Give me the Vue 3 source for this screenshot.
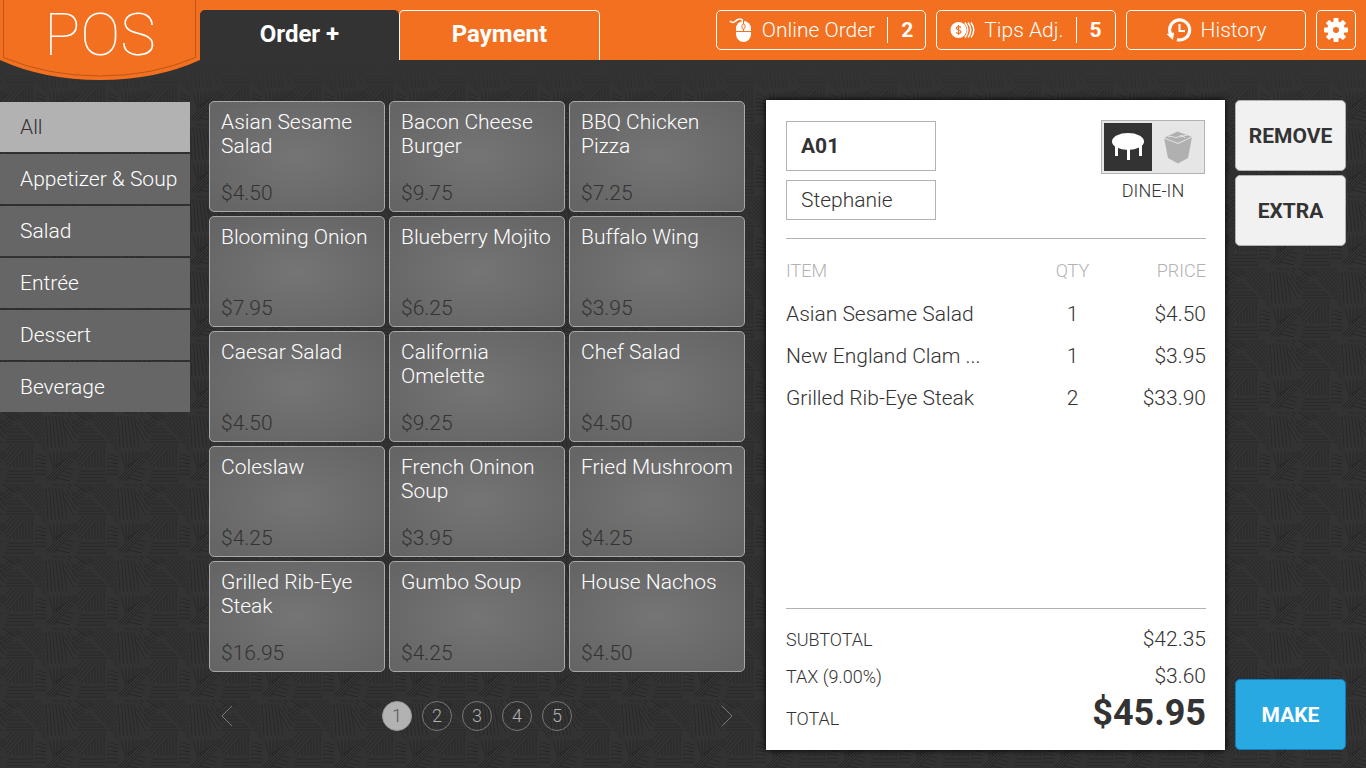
<script setup>
import { ref } from 'vue'

const categories = ['All', 'Appetizer & Soup', 'Salad', 'Entrée', 'Dessert', 'Beverage']
const category = ref('All')

const products = [
  ['Asian Sesame Salad', '$4.50'],
  ['Bacon Cheese Burger', '$9.75'],
  ['BBQ Chicken Pizza', '$7.25'],
  ['Blooming Onion', '$7.95'],
  ['Blueberry Mojito', '$6.25'],
  ['Buffalo Wing', '$3.95'],
  ['Caesar Salad', '$4.50'],
  ['California Omelette', '$9.25'],
  ['Chef Salad', '$4.50'],
  ['Coleslaw', '$4.25'],
  ['French Oninon Soup', '$3.95'],
  ['Fried Mushroom', '$4.25'],
  ['Grilled Rib-Eye Steak', '$16.95'],
  ['Gumbo Soup', '$4.25'],
  ['House Nachos', '$4.50'],
]

const lines = [
  ['Asian Sesame Salad', 1, '$4.50'],
  ['New England Clam ...', 1, '$3.95'],
  ['Grilled Rib-Eye Steak', 2, '$33.90'],
]

const table = ref('A01')
const customer = ref('Stephanie')
const page = ref(1)
const mode = ref('DINE-IN')

// Evenly spaced strokes between a first and a last segment: [x1, y1, x2, y2]
function hatch(a, b, n) {
  let d = ''
  for (let i = 0; i < n; i++) {
    const [x1, y1, x2, y2] = a.map((v, k) => +(v + ((b[k] - v) * i) / (n - 1)).toFixed(1))
    d += `M${x1} ${y1}L${x2} ${y2}`
  }
  return d
}
const texture = [
  hatch([13, 0, 46, 38], [38, 0, 45, 8], 8),
  hatch([2, 0, 18, 10], [12, 0, 20, 5], 3),
  hatch([46, 4, 48, 36], [62, 4, 67, 35], 6),
  hatch([0, 12, 13, 3], [3, 22, 14, 14], 4),
  hatch([16, 14, 18, 14], [8, 20, 25, 20], 3),
  hatch([7, 24, 29, 24], [5, 30, 35, 30], 3),
  hatch([14, 48, 14, 56], [32, 32, 32, 56], 7),
  hatch([2, 43, 12, 32], [7, 57, 29, 32], 5),
  hatch([8, 59, 33, 59], [5, 69, 34, 69], 4),
  hatch([45, 68, 75, 38], [53, 69, 79, 43], 4),
  hatch([36, 42, 46, 45], [34, 62, 46, 62], 6),
  hatch([49, 41, 54, 57], [70, 39, 60, 53], 6),
  hatch([63, 12, 74, 32], [68, 3, 79, 16], 4),
  hatch([56, 66, 70, 69], [66, 56, 73, 58], 4),
  hatch([52, 0, 58, 2], [68, 0, 72, 2], 3),
].join('')
</script>

<template>
  <div class="pos">
    <svg class="texture" aria-hidden="true">
      <defs>
        <pattern id="weave" width="72" height="72" y="64" patternUnits="userSpaceOnUse">
          <g fill="none" stroke="#272727">
            <path :d="texture" />
            <path :d="texture" transform="translate(-72 0)" />
          </g>
        </pattern>
      </defs>
      <rect width="100%" height="100%" fill="url(#weave)" />
    </svg>

    <header class="bar">
      <a class="logo" href="#">
        <svg width="200" height="80" viewBox="0 0 200 80" aria-hidden="true">
          <path d="M0 0H200V60Q156 80 100 80T0 60Z" fill="#f37021" />
          <path d="M3.500 0V57.500Q48 76 100 76T195.500 57.500V0" fill="none" stroke="#bd5616" />
        </svg>
        <span>POS</span>
      </a>
      <nav class="tabs">
        <button class="tab on">Order +</button>
        <button class="tab">Payment</button>
      </nav>
      <div class="tools">
        <button class="tool count">
          <svg width="24" height="26" viewBox="0 0 24 26" aria-hidden="true">
            <path d="M1 4C4 7 5 5 8 3S14 2 15 6" fill="none" stroke="#fff" stroke-width="1.600" />
            <rect x="7" y="4" width="15" height="21" rx="7.500" fill="#fff" />
            <path d="M7 14.500H22M14.500 3V14" stroke="#f37021" />
            <rect x="13" y="7" width="3" height="5" rx="1.500" fill="#fff" stroke="#f37021" />
          </svg>
          <span>Online Order</span><b>2</b>
        </button>
        <button class="tool count">
          <svg width="25" height="18" viewBox="0 0 25 18" aria-hidden="true">
            <circle cx="8.500" cy="9" r="8" fill="#fff" />
            <path d="M11 6.500C9.500 5 6.300 5.500 6.300 7.300C6.300 9.500 11 8.500 11 10.800C11 12.700 7.500 13 6 11.300M8.500 4V14" fill="none" stroke="#f37021" stroke-width="1.200" />
            <path d="M15 1.500Q20.500 9 15 16.500M18 1.500Q23.500 9 18 16.500M21 1.500Q26.500 9 21 16.500" fill="none" stroke="#fff" stroke-width="1.500" />
          </svg>
          <span>Tips Adj.</span><b>5</b>
        </button>
        <button class="tool">
          <svg width="26" height="26" viewBox="0 0 26 26" aria-hidden="true">
            <path d="M4.500 17A10 10 0 1 1 11 22.600" fill="none" stroke="#fff" stroke-width="3.200" />
            <path d="M0.500 17L8 15.500L7 23Z" fill="#fff" />
            <path d="M13.500 7V14H19" fill="none" stroke="#fff" stroke-width="2" />
          </svg>
          <span>History</span>
        </button>
        <button class="tool gear" aria-label="Settings">
          <svg width="24" height="24" viewBox="-12 -12 24 24" aria-hidden="true">
            <g fill="#fff">
              <rect v-for="n in 4" :key="n" x="-2.500" y="-12" width="5" height="24" rx="1" :transform="`rotate(${n * 45})`" />
            </g>
            <circle r="5.700" fill="none" stroke="#fff" stroke-width="6" />
            <circle r="3" fill="#f37021" />
          </svg>
        </button>
      </div>
    </header>

    <main class="work">
      <nav class="cats">
        <button v-for="c in categories" :key="c" :class="{ on: c === category }" @click="category = c">{{ c }}</button>
      </nav>

      <section class="menu">
        <div class="grid">
          <button v-for="p in products" :key="p[0]" class="card">
            <span>{{ p[0] }}</span>
            <span class="cost">{{ p[1] }}</span>
          </button>
        </div>
        <nav class="pager">
          <button class="arrow" aria-label="Previous page">
            <svg width="12" height="22" viewBox="0 0 12 22"><path d="M11 1L1 11L11 21" /></svg>
          </button>
          <div class="dots">
            <button v-for="n in 5" :key="n" :class="{ on: n === page }" @click="page = n">{{ n }}</button>
          </div>
          <button class="arrow" aria-label="Next page">
            <svg width="12" height="22" viewBox="0 0 12 22"><path d="M1 1L11 11L1 21" /></svg>
          </button>
        </nav>
      </section>

      <section class="ticket">
        <div class="head">
          <div class="fields">
            <input v-model="table" class="table-no" aria-label="Table" />
            <input v-model="customer" aria-label="Customer" />
          </div>
          <div class="mode">
            <div class="switch">
              <button :class="{ on: mode === 'DINE-IN' }" aria-label="Dine-in" @click="mode = 'DINE-IN'">
                <svg width="32" height="28" viewBox="0 0 32 28" aria-hidden="true">
                  <ellipse cx="16" cy="8.500" rx="16" ry="8.500" fill="#fff" />
                  <path d="M4.500 12V23M16.500 14V27M28.500 12V23" stroke="#fff" stroke-width="3" />
                </svg>
              </button>
              <button :class="{ on: mode === 'TO-GO' }" aria-label="To-go" @click="mode = 'TO-GO'">
                <svg width="30" height="33" viewBox="0 0 30 33" aria-hidden="true">
                  <path d="M1 7L14.500 .5L29 6L25 27L15 32.500L5 27Z" fill="#b0b0b0" />
                  <path d="M1 7L15 12.500L29 6M5 6C10 4 12 8 15 6S20 4 22 7M17 6L24 4" fill="none" stroke="#e6e6e6" />
                </svg>
              </button>
            </div>
            <span>{{ mode }}</span>
          </div>
        </div>
        <table class="items">
          <thead>
            <tr><th>ITEM</th><th>QTY</th><th>PRICE</th></tr>
          </thead>
          <tbody>
            <tr v-for="l in lines" :key="l[0]">
              <td>{{ l[0] }}</td><td>{{ l[1] }}</td><td>{{ l[2] }}</td>
            </tr>
          </tbody>
        </table>
        <dl class="sums">
          <div><dt>SUBTOTAL</dt><dd>$42.35</dd></div>
          <div><dt>TAX (9.00%)</dt><dd>$3.60</dd></div>
          <div class="total"><dt>TOTAL</dt><dd>$45.95</dd></div>
        </dl>
      </section>

      <aside class="actions">
        <button>REMOVE</button>
        <button>EXTRA</button>
        <button class="make">MAKE</button>
      </aside>
    </main>
  </div>
</template>

<style>
body { margin: 0; background: #333; }
</style>

<style scoped>
* { box-sizing: border-box; }
button, input { font: inherit; color: inherit; margin: 0; padding: 0; border: 0; background: none; border-radius: 0; }
button { cursor: pointer; }
svg { display: block; flex: none; }

.pos {
  position: relative;
  display: flex;
  flex-direction: column;
  min-height: 100vh;
  background: #333;
  color: #333;
  font: 300 21px/24px Roboto, "Liberation Sans", sans-serif;
}
.texture { position: absolute; top: 60px; left: 0; width: 100%; height: calc(100% - 60px); }

.bar { position: relative; z-index: 1; display: flex; height: 60px; background: #f37021; color: #fff; }
.logo { position: relative; width: 200px; height: 80px; flex: none; color: #fff; text-decoration: none; }
.logo span { position: absolute; inset: 0 0 auto; text-align: center; font-size: 60px; line-height: 70px; font-weight: 100; }
.tabs { display: flex; align-items: flex-end; }
.tab { width: 201px; height: 50px; padding-bottom: 3px; font-size: 24px; font-weight: 700; border-radius: 5px 5px 0 0; border: 1px solid #fff; border-bottom: 0; }
.tab.on { width: 199px; background: #333; border-color: #333; }
.tools { display: flex; gap: 10px; padding: 10px; margin-left: auto; }
.tool { display: flex; align-items: center; justify-content: center; gap: 9px; width: 180px; height: 40px; border: 1px solid #fff; border-radius: 5px; }
.tool:first-child { width: 210px; }
.tool b { padding-left: 13px; margin-left: 3px; border-left: 1px solid #fff; line-height: 26px; font-weight: 700; }
.tool.gear { width: 40px; }

.work {
  position: relative;
  flex: 1;
  display: grid;
  grid-template-columns: 190px 19px minmax(0, 536fr) 21px minmax(0, 459fr) 10px 111px;
  padding: 40px 20px 18px 0;
  background: linear-gradient(#333, #3330 40px);
}

.cats { grid-column: 1; display: flex; flex-direction: column; gap: 2px; padding-top: 2px; color: #fff; }
.cats button { height: 50px; padding-left: 20px; text-align: left; background: #666; }
.cats .on { background: #b2b2b2; color: #333; }

.menu { grid-column: 3; padding-top: 1px; }
.grid { display: grid; grid-template-columns: repeat(3, 1fr); grid-auto-rows: 111px; gap: 4px; }
.card {
  display: flex;
  flex-direction: column;
  justify-content: space-between;
  padding: 8px 8px 6px 11px;
  border: 1px solid #a8a8a8;
  border-radius: 5px;
  background: radial-gradient(ellipse at center, #757575, #656565 90%);
  color: #fff;
  text-align: left;
}
.cost { color: #333; }
.pager { display: flex; align-items: center; justify-content: space-between; padding: 29px 12px 0; }
.arrow path { fill: none; stroke: #777; }
.dots { display: flex; gap: 10px; }
.dots button { width: 30px; height: 30px; border: 1px solid #777; border-radius: 50%; color: #b2b2b2; font-size: 18px; line-height: 28px; }
.dots .on { background: #b2b2b2; border-color: #999; color: #555; }

.ticket { grid-column: 5; display: flex; flex-direction: column; padding: 20px 19px 13px 20px; background: #fff; box-shadow: 0 0 6px #000; }
.head { display: flex; justify-content: space-between; height: 119px; border-bottom: 1px solid #b2b2b2; }
.fields { display: flex; flex-direction: column; gap: 9px; padding-top: 1px; }
.fields input { width: 150px; height: 40px; padding: 0 14px; border: 1px solid #b2b2b2; }
.fields .table-no { height: 50px; font-weight: 700; }
.mode { display: flex; flex-direction: column; align-items: center; gap: 5px; padding-right: 1px; font-size: 18px; }
.switch { display: flex; gap: 2px; padding: 2px; border: 1px solid #b2b2b2; background: #e6e6e6; }
.switch button { display: flex; align-items: center; justify-content: center; width: 48px; height: 48px; }
.switch .on { background: #333; }

.items { width: 100%; margin-top: 9px; border-collapse: collapse; table-layout: fixed; }
.items th { height: 45px; padding: 0; font-size: 18px; font-weight: 300; color: #b2b2b2; }
.items td { height: 42px; padding: 0; }
.items th:first-child { width: 248px; }
.items th:nth-child(2) { width: 77px; }
.items tr > :first-child { text-align: left; }
.items tr > :nth-child(2) { text-align: center; }
.items tr > :last-child { text-align: right; }

.sums { margin: auto 0 0; padding: 12px 0 0; border-top: 1px solid #b2b2b2; }
.sums div { display: flex; justify-content: space-between; align-items: baseline; line-height: 36px; }
.sums dt { font-size: 18px; }
.sums dd { margin: 0; }
.sums .total dd { font-size: 36px; font-weight: 700; }

.actions { grid-column: 7; display: flex; flex-direction: column; gap: 4px; }
.actions button { height: 71px; border: 1px solid #b2b2b2; border-radius: 5px; background: #f1f1f1; font-weight: 700; }
.actions .make { margin-top: auto; background: #29a9e1; border-color: #0d7fc0; color: #fff; }
</style>
